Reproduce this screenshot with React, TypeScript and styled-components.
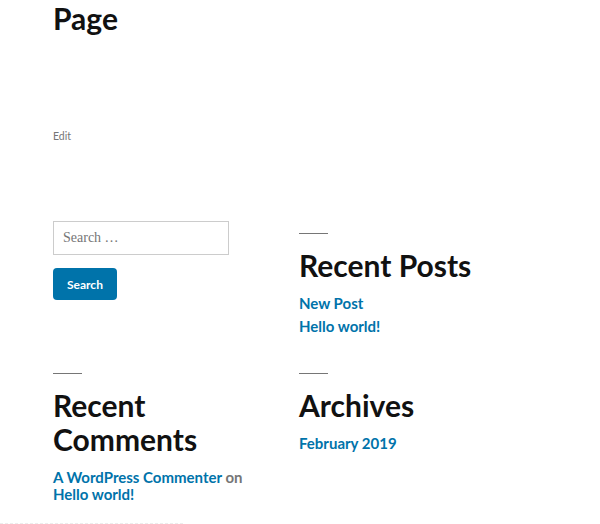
import React from "react";
import styled, { createGlobalStyle } from "styled-components";

const GlobalStyle = createGlobalStyle`
  html, body { margin: 0; padding: 0; background: #fff; }
  body {
    font-family: "Lato", "Noto Sans", sans-serif;
    color: #111;
    -webkit-font-smoothing: antialiased;
  }
  * { box-sizing: border-box; }
`;

const Page = styled.main`
  padding-left: 53px;
`;

const EntryTitle = styled.h1`
  margin: 0;
  font-size: 30px;
  line-height: 36px;
  font-weight: 700;
  color: #111;
`;

const EditLink = styled.a`
  display: block;
  margin-top: 92px;
  font-size: 10.5px;
  line-height: 16px;
  color: #767676;
  text-decoration: none;
`;

const WidgetGrid = styled.div`
  display: grid;
  grid-template-columns: 220px 220px;
  column-gap: 26px;
  row-gap: 23px;
  align-items: start;
  margin-top: 77px;
`;

const Widget = styled.section`
  display: flex;
  flex-direction: column;
  align-items: flex-start;
`;

const WidgetTitle = styled.h2`
  margin: 0;
  font-size: 30px;
  line-height: 34px;
  font-weight: 700;
  color: #111;
  &::before {
    content: "";
    display: block;
    width: 29px;
    height: 1px;
    background: #767676;
    margin: 12px 0 14px;
  }
`;

const SearchInput = styled.input`
  width: 176px;
  height: 34px;
  margin: 0;
  padding: 0 9px;
  border: 1px solid #ccc;
  border-radius: 0;
  font-family: "Liberation Serif", serif;
  font-size: 14px;
  color: #111;
  background: #fff;
  &::placeholder { color: #767676; }
`;

const SearchButton = styled.button`
  margin-top: 13px;
  height: 32px;
  padding: 0 14px;
  border: none;
  border-radius: 4px;
  background: #0073aa;
  color: #fff;
  font-family: "Lato", sans-serif;
  font-size: 12px;
  font-weight: 700;
  cursor: pointer;
`;

const LinkList = styled.ul<{ $gap?: number; $lh?: number }>`
  list-style: none;
  margin: ${(p) => p.$gap ?? 10}px 0 0;
  padding: 0;
  font-size: 15px;
  line-height: ${(p) => p.$lh ?? 23}px;
  font-weight: 700;
`;

const Item = styled.li``;

const Link = styled.a`
  color: #0073aa;
  text-decoration: none;
`;

const Muted = styled.span`
  color: #767676;
`;

const FooterRule = styled.div`
  width: 183px;
  margin-top: 20px;
  border-top: 1px dashed #ececec;
`;

export default function App() {
  return (
    <>
      <GlobalStyle />
      <Page>
        <EntryTitle>Page</EntryTitle>
        <EditLink href="#">Edit</EditLink>
        <WidgetGrid>
          <Widget>
            <SearchInput type="search" placeholder="Search …" />
            <SearchButton type="button">Search</SearchButton>
          </Widget>
          <Widget>
            <WidgetTitle>Recent Posts</WidgetTitle>
            <LinkList>
              <Item><Link href="#">New Post</Link></Item>
              <Item><Link href="#">Hello world!</Link></Item>
            </LinkList>
          </Widget>
          <Widget>
            <WidgetTitle>Recent Comments</WidgetTitle>
            <LinkList $gap={13} $lh={17}>
              <Item>
                <Link href="#">A WordPress Commenter</Link> <Muted>on</Muted>{" "}
                <Link href="#">Hello world!</Link>
              </Item>
            </LinkList>
          </Widget>
          <Widget>
            <WidgetTitle>Archives</WidgetTitle>
            <LinkList>
              <Item><Link href="#">February 2019</Link></Item>
            </LinkList>
          </Widget>
        </WidgetGrid>
      </Page>
      <FooterRule />
    </>
  );
}
